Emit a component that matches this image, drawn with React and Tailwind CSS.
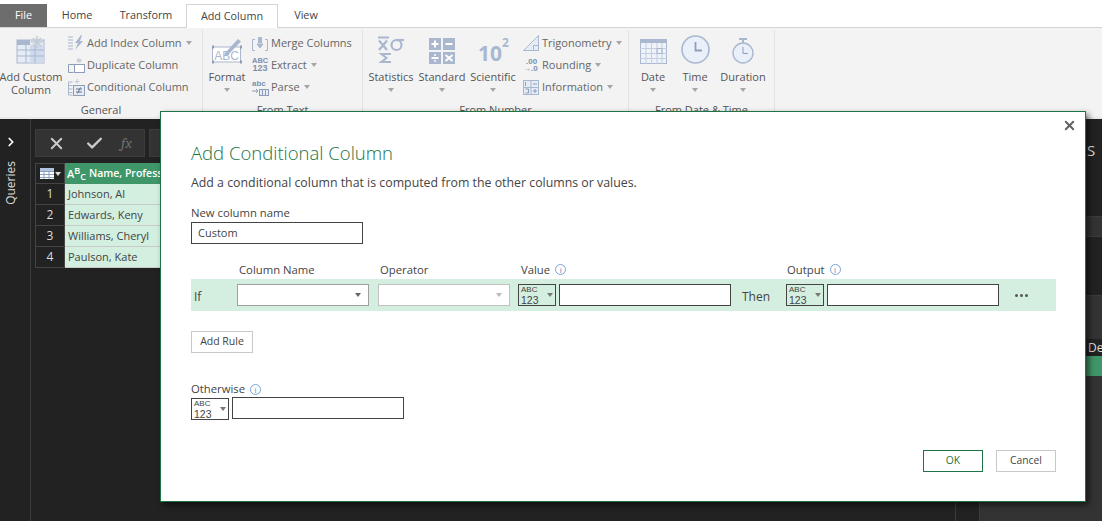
import { Check, X, ChevronRight } from 'lucide-react'

const font = { fontFamily: '"Open Sans", "Noto Sans", sans-serif' }

function Caret({ className = 'border-t-[#a6a6a6]' }) {
  return <span className={`inline-block h-0 w-0 border-x-[3.5px] border-t-[4px] border-x-transparent ${className}`} />
}

function TableIcon() {
  return (
    <svg width="30" height="29" viewBox="0 0 30 29" fill="none">
      <rect x="1" y="5" width="27" height="23" fill="#e6ecf6" stroke="#a9b7cf" />
      <rect x="1" y="5" width="13" height="5" fill="#a9b7cf" />
      <rect x="14" y="10" width="14" height="18" fill="#cfdaec" />
      <path d="M1 15h27M1 21h27M10 10v18M19 10v18" stroke="#a9b7cf" />
      <path d="M21 1v12M15 7h12M17 3l8 8M25 3l-8 8" stroke="#c4cbd6" strokeWidth="1.6" />
    </svg>
  )
}

function FormatIcon() {
  return (
    <svg width="32" height="28" viewBox="0 0 32 28" fill="none">
      <rect x="1.5" y="11" width="28" height="15" fill="#fff" stroke="#a9b7cf" />
      <path d="M1 11h2M29 11h2M1 26h2M29 26h2" stroke="#8e9db8" strokeWidth="3" />
      <text x="15.5" y="24" textAnchor="middle" fontSize="12" fontFamily="Liberation Sans" fill="#a9b7cf">ABC</text>
      <path d="M14 17L27 3l3 2.5L17 19l-4 1z" fill="#a9b7cf" />
    </svg>
  )
}

function StatsIcon() {
  return (
    <svg width="28" height="28" viewBox="0 0 28 28" fill="none" stroke="#a9b7cf" strokeWidth="2.2">
      <path d="M1 1.5h11M2 4.5l8 9.5M10 4.5l-8 9.5" />
      <ellipse cx="19.5" cy="9" rx="5" ry="5" />
      <path d="M19 4h8" />
      <path d="M14 18H4.5l5 4-5 4H14" />
    </svg>
  )
}

function StandardIcon() {
  return (
    <svg width="26" height="26" viewBox="0 0 26 26">
      <rect width="12" height="12" fill="#a9b7cf" />
      <rect x="14" width="12" height="12" fill="#a9b7cf" />
      <rect y="14" width="12" height="12" fill="#a9b7cf" />
      <rect x="14" y="14" width="12" height="12" fill="#a9b7cf" />
      <path d="M2.5 6h7M6 2.5v7M16.5 6h7M2.5 20h7M16.5 17l7 6M23.5 17l-7 6" stroke="#fff" strokeWidth="2" />
      <circle cx="6" cy="17" r="1" fill="#fff" />
      <circle cx="6" cy="23" r="1" fill="#fff" />
    </svg>
  )
}

function ScientificIcon() {
  return (
    <div className="flex h-[28px] items-start pl-[1px] font-bold leading-none text-[#a9b7cf]">
      <span className="mt-[7px] text-[21px] leading-none">10</span>
      <span className="mt-[1px] text-[12px] leading-none">2</span>
    </div>
  )
}

function CalendarIcon() {
  return (
    <svg width="27" height="25" viewBox="0 0 27 25" fill="none">
      <rect x=".5" y=".5" width="26" height="24" fill="#eef2f9" stroke="#a9b7cf" />
      <rect width="27" height="4" fill="#a9b7cf" />
      <path d="M0 9.5h27M0 14.5h27M0 19.5h27M6 4v21M11.5 4v21M17 4v21M22 4v21" stroke="#c3cee0" />
      <rect x="17" y="9.5" width="5" height="5" stroke="#a9b7cf" />
    </svg>
  )
}

function ClockIcon() {
  return (
    <svg width="29" height="29" viewBox="0 0 29 29" fill="none">
      <circle cx="14.5" cy="14.5" r="13.5" fill="#eaf0fa" stroke="#a9b7cf" strokeWidth="1.6" />
      <path d="M14.5 7v8.5H21" stroke="#8e9db8" strokeWidth="1.8" />
    </svg>
  )
}

function StopwatchIcon() {
  return (
    <svg width="24" height="26" viewBox="0 0 24 26" fill="none">
      <path d="M8 1h8M12 1v4" stroke="#a9b7cf" strokeWidth="2" />
      <circle cx="12" cy="15" r="10" fill="#eaf0fa" stroke="#a9b7cf" strokeWidth="1.4" />
      <path d="M12 9v6.5h5" stroke="#8e9db8" />
    </svg>
  )
}

function LargeButton({ icon, label, width, caret = true }) {
  return (
    <div className="flex flex-col items-center" style={{ width }}>
      <div className="flex h-[30px] items-end justify-center">{icon}</div>
      <div className="mt-[6px] text-center text-[11px] leading-[13px] whitespace-nowrap text-[#555]">{label}</div>
      {caret && <div className="mt-[4px] flex h-[6px] items-center"><Caret /></div>}
    </div>
  )
}

function SmallIcon({ kind }) {
  if (kind === 'index') {
    return (
      <svg width="16" height="16" viewBox="0 0 16 16" fill="none">
        <path d="M0 2h5M0 5h5M0 8h5M0 11h5M0 14h5" stroke="#a9b7cf" />
        <path d="M13 0L7 8h3l-3 7 8-9h-3l2-6z" fill="#a9b7cf" />
      </svg>
    )
  }
  if (kind === 'duplicate') {
    return (
      <svg width="17" height="15" viewBox="0 0 17 15" fill="none" stroke="#8e9db8">
        <path d="M5.5 14.5h-5v-8h6" />
        <rect x="6.5" y="6.5" width="10" height="8" fill="#fff" />
        <path d="M11 0v5M8.5 2.5h5M9 1l4 3M13 1L9 4" stroke="#c4cbd6" />
      </svg>
    )
  }
  if (kind === 'conditional') {
    return (
      <svg width="17" height="17" viewBox="0 0 17 17" fill="none">
        <path d="M.5 3h4M.5 6.5h4M.5 10h4M.5 13.5h4M.5 3v13h4" stroke="#a9b7cf" />
        <rect x="5.5" y="6.5" width="11" height="10" fill="#e6ecf6" stroke="#8e9db8" />
        <path d="M8 10h6M8 13h6M12.5 8.5l-3 6" stroke="#66748f" />
        <path d="M9 0v5M6.5 2.5h5" stroke="#c4cbd6" />
      </svg>
    )
  }
  if (kind === 'merge') {
    return (
      <svg width="16" height="15" viewBox="0 0 16 15" fill="none" stroke="#a9b7cf">
        <path d="M3 3.5H.5v11H3M13 3.5h2.5v11H13" />
        <rect x="6" y="1" width="4" height="6" fill="#a9b7cf" stroke="none" />
        <path d="M5 8l3 4 3-4z" fill="#a9b7cf" />
      </svg>
    )
  }
  if (kind === 'extract') {
    return (
      <div className="w-[16px] text-center font-bold text-[#7f90ad]" style={{ fontFamily: '"Liberation Sans", sans-serif' }}>
        <div className="text-[7.5px] leading-[7px]">ABC</div>
        <div className="text-[9px] leading-[9px]">123</div>
      </div>
    )
  }
  if (kind === 'parse') {
    return (
      <svg width="17" height="17" viewBox="0 0 17 17" fill="none">
        <text x="0" y="7" fontSize="8" fontWeight="bold" fontFamily="Liberation Sans" fill="#7f90ad">abc</text>
        <rect x="7.5" y="10.5" width="9" height="6" fill="#e6ecf6" stroke="#8e9db8" />
        <path d="M10.5 10v7M13.5 10v7" stroke="#8e9db8" />
        <path d="M0 12h6M4 10l2 2-2 2" stroke="#8e9db8" />
      </svg>
    )
  }
  if (kind === 'trig') {
    return (
      <svg width="16" height="16" viewBox="0 0 16 16" fill="#e6ecf6" stroke="#a9b7cf">
        <path d="M.5 15.5L15.5 .5v15z" />
        <path d="M10.5 15.5v-5h5" fill="none" />
      </svg>
    )
  }
  if (kind === 'rounding') {
    return (
      <div className="relative h-[14px] w-[16px] text-[#7f90ad]" style={{ fontFamily: '"Liberation Sans", sans-serif' }}>
        <div className="pl-[3px] text-[8px] leading-[7px] font-bold">.00</div>
        <div className="flex items-center text-[8px] leading-[7px] font-bold"><span>→</span><span>.0</span></div>
      </div>
    )
  }
  return (
    <svg width="16" height="15" viewBox="0 0 16 15" fill="none">
      <rect x=".5" y=".5" width="15" height="14" fill="#e6ecf6" stroke="#a9b7cf" />
      <path d="M8 0v15M0 7.5h16" stroke="#a9b7cf" />
      <path d="M2.5 2v4M2.5 9h3v4h-3M10 4h4M10 11h4M12 9v4" stroke="#8e9db8" />
    </svg>
  )
}

function SmallButton({ kind, label, caret }) {
  return (
    <div className="flex h-[22px] items-center text-[11px] whitespace-nowrap text-[#666]">
      <span className="flex w-[18px] shrink-0 justify-center"><SmallIcon kind={kind} /></span>
      <span className="ml-[2px]">{label}</span>
      {caret && <span className="ml-[4px] flex"><Caret /></span>}
    </div>
  )
}

function Group({ label, width, children }) {
  return (
    <div className="flex h-full shrink-0 flex-col border-r border-[#e2e2e2]" style={{ width }}>
      <div className="flex h-[74px] pt-[4px]">{children}</div>
      <div className="text-center text-[11px] leading-[14px] text-[#555]">{label}</div>
    </div>
  )
}

function Ribbon() {
  return (
    <div className="flex h-[92px] shrink-0 border-t border-b-[2px] border-t-[#d4d4d4] border-b-[#e9e9e9] bg-[#f3f3f3] pt-[2px]">
      <Group label="General" width={203}>
        <div className="-ml-[1px] w-[62px]">
          <LargeButton icon={<TableIcon />} label={<>Add Custom<br />Column</>} width={64} caret={false} />
        </div>
        <div className="-mt-[2px] ml-[6px]">
          <SmallButton kind="index" label="Add Index Column" caret />
          <SmallButton kind="duplicate" label="Duplicate Column" />
          <SmallButton kind="conditional" label="Conditional Column" />
        </div>
      </Group>
      <Group label="From Text" width={160}>
        <LargeButton icon={<FormatIcon />} label="Format" width={48} />
        <div className="-mt-[2px]">
          <SmallButton kind="merge" label="Merge Columns" />
          <SmallButton kind="extract" label="Extract" caret />
          <SmallButton kind="parse" label="Parse" caret />
        </div>
      </Group>
      <Group label="From Number" width={266}>
        <div className="ml-[3px] flex">
          <LargeButton icon={<StatsIcon />} label="Statistics" width={50} />
          <LargeButton icon={<StandardIcon />} label="Standard" width={52} />
          <LargeButton icon={<ScientificIcon />} label="Scientific" width={50} />
        </div>
        <div className="-mt-[2px] ml-[4px]">
          <SmallButton kind="trig" label="Trigonometry" caret />
          <SmallButton kind="rounding" label="Rounding" caret />
          <SmallButton kind="info" label="Information" caret />
        </div>
      </Group>
      <Group label="From Date & Time" width={146}>
        <div className="ml-[4px] flex">
          <LargeButton icon={<CalendarIcon />} label="Date" width={40} />
          <LargeButton icon={<ClockIcon />} label="Time" width={44} />
          <LargeButton icon={<StopwatchIcon />} label="Duration" width={52} />
        </div>
      </Group>
    </div>
  )
}

function Tabs() {
  return (
    <div className="flex h-[27px] shrink-0 items-end bg-white text-[10.8px] text-[#444]">
      <div className="flex h-[23px] w-[47px] items-center justify-center bg-[#6d6d6d] text-white">File</div>
      <div className="flex h-[23px] w-[59px] items-center justify-center pl-[1px]">Home</div>
      <div className="flex h-[23px] w-[80px] items-center justify-center">Transform</div>
      <div className="relative -mb-[1px] flex h-[24px] w-[92px] items-center justify-center border border-b-0 border-[#d4d4d4] bg-white">Add Column</div>
      <div className="flex h-[23px] w-[56px] items-center justify-center">View</div>
    </div>
  )
}

function ColumnTypeGrid() {
  return (
    <svg width="14" height="11" viewBox="0 0 14 11">
      <rect width="14" height="11" fill="#fff" />
      <path d="M0 3.5h14M0 6.5h14M0 9.5h14M4 3v8M9 3v8" stroke="#8a9fc4" />
      <rect width="14" height="3" fill="#b4c3dd" />
    </svg>
  )
}

function DataPreview() {
  const rows = ['Johnson, Al', 'Edwards, Keny', 'Williams, Cheryl', 'Paulson, Kate']
  return (
    <div className="flex-1 bg-[#222] pt-[10px] pl-[4px]">
      <div className="flex h-[28px] items-center">
        <div className="flex h-[28px] w-[110px] items-center border border-[#3c3c3c] bg-[#333]">
          <X size={19} strokeWidth={2.4} className="ml-[11px] text-[#ccc]" />
          <Check size={19} strokeWidth={3} className="ml-[19px] text-[#ccc]" />
          <span className="ml-[17px] font-serif text-[15px] text-[#6f6f6f] italic">fx</span>
        </div>
        <div className="ml-[4px] h-[28px] flex-1 border border-[#3c3c3c] bg-[#333]" />
      </div>
      <div className="mt-[6px] w-[200px] text-[11px]">
        <div className="flex h-[21px]">
          <div className="flex w-[30px] items-center justify-center gap-[1px] border border-[#444] bg-[#222]">
            <ColumnTypeGrid />
            <Caret className="border-t-[#ddd]" />
          </div>
          <div className="flex flex-1 items-center bg-[#3f9668] pl-[2px] font-semibold text-white">
            <span className="text-[11px] leading-none">A<sup className="text-[9px]">B</sup><sub className="text-[9px]">C</sub></span>
            <span className="ml-[3px] text-[10.5px] whitespace-nowrap">Name, Profession</span>
          </div>
        </div>
        {rows.map((name, i) => (
          <div key={name} className="flex h-[21px]">
            <div className="flex w-[30px] items-center justify-center border border-t-0 border-[#444] bg-[#222] text-[12px] text-[#ddd]">{i + 1}</div>
            <div className="flex flex-1 items-center border-b border-[#c9c9c9] bg-[#d3efe0] pl-[3px] text-[#444]">{name}</div>
          </div>
        ))}
      </div>
    </div>
  )
}

function RightPanel() {
  return (
    <div className="w-[123px] shrink-0 border-l border-[#3c3c3c] bg-[#222] text-[#ddd]">
      <div className="h-[97px] pt-[21px] pl-[107px] text-[15px] leading-[20px]">S</div>
      <div className="h-[21px] border-y border-[#3c3c3c] bg-[#333]" />
      <div className="h-[58px]" />
      <div className="flex h-full flex-col border-t border-[#3c3c3c] bg-[#333]">
        <div className="h-[43px]" />
        <div className="h-[17px] bg-[#222] pl-[108px] text-[12px] leading-[17px]">De</div>
        <div className="h-[20px] bg-[#3f9668]" />
      </div>
    </div>
  )
}

function Info() {
  return (
    <span className="ml-[5px] inline-flex h-[11px] w-[11px] items-center justify-center rounded-full border border-[#7ba3da] text-[8px] leading-none text-[#5b7fb5]">i</span>
  )
}

function TypeButton() {
  return (
    <div className="flex h-[22px] w-[38px] shrink-0 items-center border border-[#444] pl-[2px]">
      <div className="w-[21px] text-[#444]" style={{ fontFamily: '"Liberation Sans", sans-serif' }}>
        <div className="text-[8px] leading-[9px]">ABC</div>
        <div className="text-[10.5px] leading-[12px]">123</div>
      </div>
      <span className="ml-[5px] flex"><Caret className="border-t-[#777]" /></span>
    </div>
  )
}

function Dialog() {
  return (
    <div className="absolute top-[111px] left-[160px] h-[391px] w-[926px] border border-[#217346] bg-white pl-[30px] shadow-[3px_3px_6px_rgba(0,0,0,0.55)]">
      <div className="absolute top-[6px] right-[8px] text-[#5f5f5f]"><X size={15} strokeWidth={3} /></div>
      <div className="pt-[27px] text-[18.5px] leading-[28px] font-light text-[#217346]">Add Conditional Column</div>
      <div className="mt-[7px] text-[12.35px] leading-[17px] text-[#444]">Add a conditional column that is computed from the other columns or values.</div>
      <div className="mt-[14px] text-[11.3px] leading-[15px] text-[#444]">New column name</div>
      <div className="mt-[2px] flex h-[22px] w-[172px] items-center border border-[#444] pl-[6px] text-[11px] text-[#444]">Custom</div>

      <div className="mt-[18px] flex h-[15px] text-[11.3px] leading-[15px] text-[#444]">
        <span className="ml-[48px] w-[141px]">Column Name</span>
        <span className="w-[141px]">Operator</span>
        <span className="flex w-[266px] items-center">Value<Info /></span>
        <span className="flex items-center">Output<Info /></span>
      </div>
      <div className="mt-[2px] flex h-[32px] w-[865px] items-center bg-[#d4efe0] text-[12px] text-[#444]">
        <span className="mt-[3px] ml-[3px] w-[43px]">If</span>
        <div className="flex h-[22px] w-[132px] items-center justify-end border border-[#a0a0a0] bg-white pr-[7px]"><Caret className="border-t-[#666]" /></div>
        <div className="ml-[9px] flex h-[22px] w-[132px] items-center justify-end border border-[#c0c0c0] bg-white pr-[7px]"><Caret className="border-t-[#bbb]" /></div>
        <div className="ml-[8px]"><TypeButton /></div>
        <div className="mb-[1px] ml-[3px] h-[22px] w-[172px] border border-[#444] bg-white" />
        <span className="mt-[3px] ml-[11px] w-[44px]">Then</span>
        <TypeButton />
        <div className="mb-[1px] ml-[3px] h-[22px] w-[172px] border border-[#444] bg-white" />
        <div className="ml-[16px] flex gap-[2px]">
          <span className="h-[3px] w-[3px] rounded-full bg-[#555]" />
          <span className="h-[3px] w-[3px] rounded-full bg-[#555]" />
          <span className="h-[3px] w-[3px] rounded-full bg-[#555]" />
        </div>
      </div>

      <div className="mt-[20px] flex h-[22px] w-[62px] items-center justify-center border border-[#c8c8c8] text-[10.5px] text-[#444]">Add Rule</div>

      <div className="mt-[29px] flex h-[15px] items-center text-[11.3px] text-[#444]">Otherwise<Info /></div>
      <div className="flex items-start">
        <div className="mt-[1px]"><TypeButton /></div>
        <div className="ml-[3px] h-[22px] w-[172px] border border-[#444]" />
      </div>

      <div className="mt-[30px] flex w-[865px] justify-end gap-[13px] text-[10.3px]">
        <div className="flex h-[22px] w-[60px] items-center justify-center border border-[#217346] text-[#217346]">OK</div>
        <div className="flex h-[22px] w-[60px] items-center justify-center border border-[#c8c8c8] text-[#444]">Cancel</div>
      </div>
    </div>
  )
}

export default function App() {
  return (
    <div className="relative flex h-[521px] w-[1102px] flex-col overflow-hidden bg-[#222]" style={font}>
      <Tabs />
      <Ribbon />
      <div className="flex min-h-0 flex-1">
        <div className="flex w-[31px] shrink-0 flex-col items-center border-r border-[#3c3c3c] bg-[#222] pt-[16px] pr-[8px] text-white">
          <ChevronRight size={14} strokeWidth={3} />
          <span className="mt-[12px] rotate-180 text-[12px] text-[#ddd] [writing-mode:vertical-rl]">Queries</span>
        </div>
        <DataPreview />
        <div className="w-[24px] shrink-0 border-l border-[#3c3c3c]" />
        <RightPanel />
      </div>
      <Dialog />
    </div>
  )
}
